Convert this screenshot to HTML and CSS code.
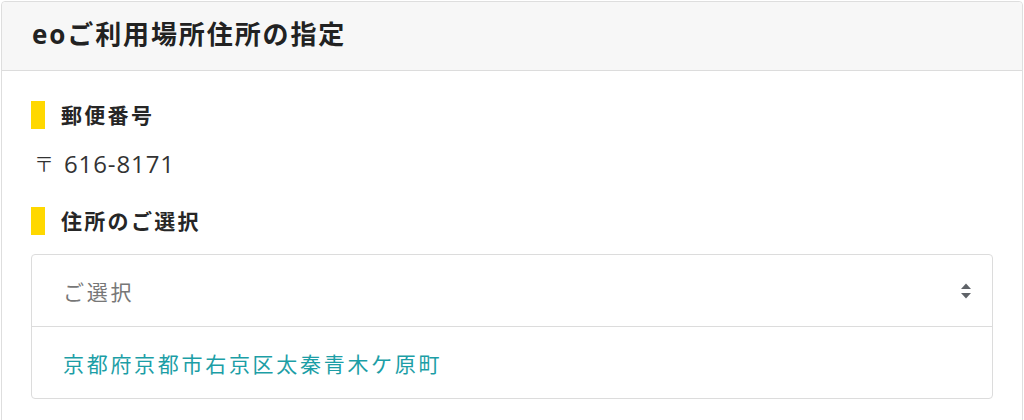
FILE: index.html
```html
<!DOCTYPE html>
<html lang="ja">
<head>
<meta charset="utf-8">
<title>eoご利用場所住所の指定</title>
<link rel="stylesheet" href="styles.css">
</head>
<body>
<div class="card">
  <div class="card-header">
    <h1 class="title">eoご利用場所住所の指定</h1>
  </div>
  <div class="card-body">
    <h2 class="section-title">郵便番号</h2>
    <p class="postal"><span class="postal-mark">〒</span><span class="postal-num">616-8171</span></p>
    <h2 class="section-title second">住所のご選択</h2>
    <div class="select-box">
      <div class="select-row placeholder">
        <span>ご選択</span>
        <svg class="sort-icon" width="12" height="16" viewBox="0 0 12 16">
          <path d="M6 0.5 L11 6 H1 Z" fill="#5f6368"/>
          <path d="M6 15.5 L11 10 H1 Z" fill="#5f6368"/>
        </svg>
      </div>
      <div class="select-row option">
        <span>京都府京都市右京区太秦青木ケ原町</span>
      </div>
    </div>
  </div>
</div>
</body>
</html>
```
FILE: styles.css
```css
html, body {
  margin: 0;
  padding: 0;
  background: #ffffff;
}
body {
  font-family: "Open Sans", "Noto Sans CJK JP", sans-serif;
  color: #333333;
}
.card {
  margin: 1px 1px 0 1px;
  border: 1px solid #dedede;
  border-radius: 4px;
  min-height: 440px;
}
.card-header {
  background: #f7f7f7;
  border-bottom: 1px solid #dcdcdc;
  height: 68px;
  display: flex;
  align-items: center;
  padding: 0 30px;
  border-radius: 4px 4px 0 0;
}
.title {
  margin: 0;
  font-size: 26px;
  font-weight: 700;
  letter-spacing: 1.9px;
  color: #222222;
  line-height: 1;
  position: relative;
  top: -2px;
}
.card-body {
  padding: 30px 29px 0 29px;
  display: flex;
  flex-direction: column;
}
.section-title {
  margin: 0;
  height: 28px;
  display: flex;
  align-items: center;
  font-size: 21px;
  font-weight: 700;
  letter-spacing: 2.3px;
  color: #262626;
  border-left: 14px solid #ffd800;
  padding-left: 16px;
  line-height: 1;
}
.section-title.second {
  margin-top: 28px;
}
.postal {
  margin: 18px 0 0 3px;
  height: 32px;
  display: flex;
  align-items: center;
  color: #333333;
}
.postal-mark {
  font-size: 20px;
  font-weight: 300;
  width: 30px;
}
.postal-num {
  font-size: 24px;
  letter-spacing: 0.9px;
}
.select-box {
  margin-top: 19px;
  border: 1px solid #dcdcdc;
  border-radius: 4px;
}
.select-row {
  height: 71px;
  display: flex;
  align-items: center;
  justify-content: space-between;
  padding: 0 20px 0 31px;
  font-size: 21px;
  letter-spacing: 2.7px;
}
.select-row.placeholder {
  color: #777777;
  border-bottom: 1px solid #dcdcdc;
}
.select-row.option {
  color: #1c9ea6;
}
.sort-icon {
  display: block;
}
```
